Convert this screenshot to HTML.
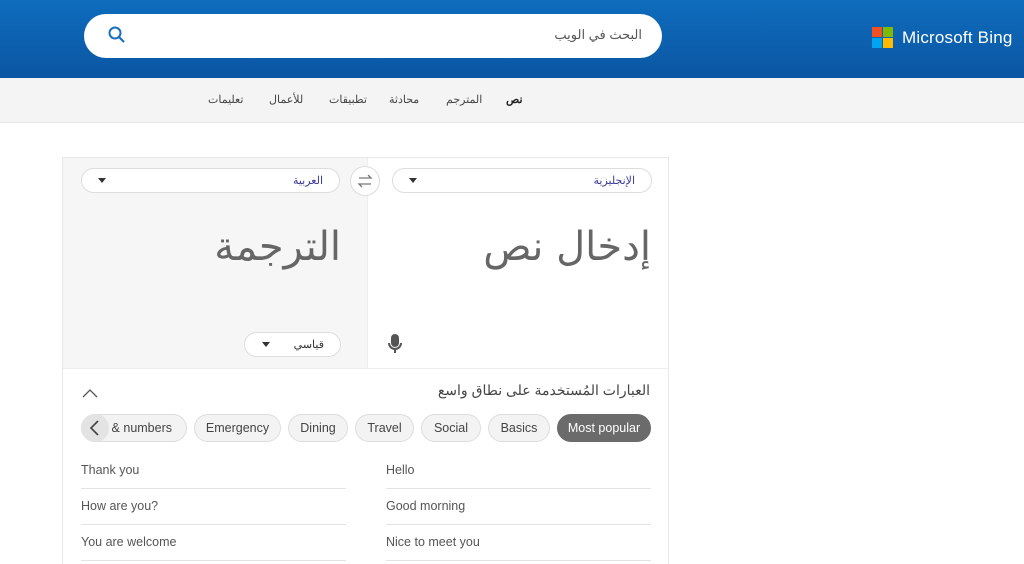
<!DOCTYPE html>
<html><head><meta charset="utf-8"><style>
*{box-sizing:border-box;margin:0;padding:0}
html,body{width:1024px;height:564px;overflow:hidden}
body{background:#fff;font-family:"Liberation Sans","Noto Sans CJK SC",sans-serif;position:relative}
.hdr{position:absolute;left:0;top:0;width:1024px;height:78px;background:linear-gradient(#0f6cbd,#0a56a2)}
.search{position:absolute;left:84px;top:14px;width:578px;height:44px;background:#fff;border-radius:22px}
.search .ph{position:absolute;right:20px;top:13px;font-size:13px;color:#555}
.logo{position:absolute;left:872px;top:27px}
.logo i{position:absolute;width:10px;height:10px}
.brand{position:absolute;left:902px;top:28px;color:#fff;font-size:17px;letter-spacing:0.2px}
.nav{position:absolute;left:0;top:78px;width:1024px;height:45px;background:#f4f4f4;border-bottom:1px solid #e6e6e6}
.nav span{position:absolute;top:15px;font-size:11px;color:#444}
.card{position:absolute;left:62px;top:157px;width:607px;height:420px;border:1px solid #e8e8e8;background:#fff}
.lp{position:absolute;left:0;top:0;width:304px;height:211px;background:#f6f6f6;border-bottom:1px solid #eee}
.rp{position:absolute;left:304px;top:0;width:302px;height:211px;border-left:1px solid #eee;border-bottom:1px solid #eee}
.sel{position:absolute;height:25px;background:#fff;border:1px solid #ddd;border-radius:13px;font-size:11px;color:#3a3a9a}
.sel .t{position:absolute;right:16px;top:5px}
.sel .a{position:absolute;left:16px;top:9px;width:0;height:0;border-left:4px solid transparent;border-right:4px solid transparent;border-top:5px solid #333}
.big{position:absolute;font-size:40px;color:#666;font-family:"DejaVu Sans",sans-serif}
.pill{position:absolute;top:256px;height:28px;border:1px solid #ddd;background:#f3f3f3;border-radius:14px;font-size:12.5px;color:#444;text-align:center;line-height:26px}
.ph2{position:absolute;font-size:12.5px;color:#555}
.ln{position:absolute;height:1px;background:#e3e3e3}
</style></head><body>
<div class="hdr">
 <div class="search"><svg style="position:absolute;left:23px;top:11px" width="20" height="20" viewBox="0 0 20 20"><circle cx="8" cy="8" r="5.5" fill="none" stroke="#1a6ec4" stroke-width="2"/><line x1="12" y1="12" x2="17" y2="17" stroke="#1a6ec4" stroke-width="2.2"/></svg><span class="ph">البحث في الويب</span></div>
 <div class="logo"><i style="left:0;top:0;background:#f25022"></i><i style="left:11px;top:0;background:#7fba00"></i><i style="left:0;top:11px;background:#00a4ef"></i><i style="left:11px;top:11px;background:#ffb900"></i></div>
 <div class="brand">Microsoft Bing</div>
</div>
<div class="nav">
 <span style="left:506px;font-weight:bold;color:#222">نص</span>
 <span style="left:446px">المترجم</span>
 <span style="left:389px">محادثة</span>
 <span style="left:329px">تطبيقات</span>
 <span style="left:269px">للأعمال</span>
 <span style="left:208px">تعليمات</span>
</div>
<div class="card">
 <div class="lp">
  <div class="sel" style="left:18px;top:10px;width:259px"><span class="t">العربية</span><span class="a"></span></div>
  <div class="big" style="right:26px;top:66px">الترجمة</div>
  <div class="sel" style="left:181px;top:174px;width:97px;color:#333"><span class="t">قياسي</span><span class="a" style="left:17px"></span></div>
 </div>
 <div class="rp">
  <div class="sel" style="left:24px;top:10px;width:260px"><span class="t">الإنجليزية</span><span class="a"></span></div>
  <div class="big" style="right:18px;top:66px">إدخال نص</div>
  <svg style="position:absolute;left:19px;top:175px" width="16" height="22" viewBox="0 0 16 22"><rect x="4" y="1" width="8" height="13" rx="4" fill="#555"/><path d="M2 10a6 6 0 0 0 12 0" fill="none" stroke="#555" stroke-width="2"/><line x1="8" y1="16" x2="8" y2="20" stroke="#555" stroke-width="2"/></svg>
 </div>
 <div style="position:absolute;left:287px;top:8px;width:30px;height:30px;border-radius:50%;background:#fff;border:1px solid #ddd"><svg width="28" height="28" viewBox="0 0 28 28"><path d="M8 11h12l-3-3M20 17H8l3 3" fill="none" stroke="#777" stroke-width="1.3"/></svg></div>
 <svg style="position:absolute;left:19px;top:229px" width="16" height="12" viewBox="0 0 16 12"><path d="M1 10l7-7 7 7" fill="none" stroke="#555" stroke-width="1.3"/></svg>
 <div style="position:absolute;right:18px;top:224px;font-size:14px;color:#444">العبارات المُستخدمة على نطاق واسع</div>
 <div class="pill" style="left:18px;width:106px;text-align:right;padding-right:14px">s &amp; numbers</div>
 <div style="position:absolute;left:18px;top:256px;width:28px;height:28px;border-radius:50%;background:#e3e3e3"><svg width="28" height="28" viewBox="0 0 28 28"><path d="M17 7l-7 7 7 7" fill="none" stroke="#444" stroke-width="1.6"/></svg></div>
 <div class="pill" style="left:131px;width:87px">Emergency</div>
 <div class="pill" style="left:225px;width:60px">Dining</div>
 <div class="pill" style="left:292px;width:59px">Travel</div>
 <div class="pill" style="left:358px;width:60px">Social</div>
 <div class="pill" style="left:425px;width:62px">Basics</div>
 <div class="pill" style="left:494px;width:94px;background:#6b6b6b;color:#fff;border-color:#6b6b6b">Most popular</div>
 <div class="ph2" style="left:18px;top:305px">Thank you</div>
 <div class="ph2" style="left:323px;top:305px">Hello</div>
 <div class="ln" style="left:18px;top:330px;width:265px"></div><div class="ln" style="left:323px;top:330px;width:265px"></div>
 <div class="ph2" style="left:18px;top:341px">How are you?</div>
 <div class="ph2" style="left:323px;top:341px">Good morning</div>
 <div class="ln" style="left:18px;top:366px;width:265px"></div><div class="ln" style="left:323px;top:366px;width:265px"></div>
 <div class="ph2" style="left:18px;top:377px">You are welcome</div>
 <div class="ph2" style="left:323px;top:377px">Nice to meet you</div>
 <div class="ln" style="left:18px;top:402px;width:265px"></div><div class="ln" style="left:323px;top:402px;width:265px"></div>
</div>
</body></html>
